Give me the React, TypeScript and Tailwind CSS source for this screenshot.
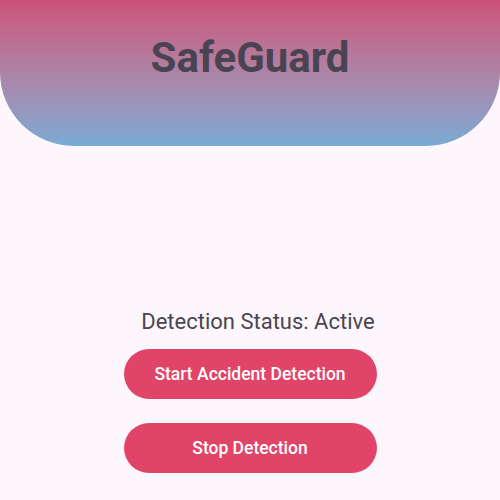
import React from 'react';

const App = () => {
  return (
    <div className="min-h-[500px] w-full bg-[#fdf7fd] font-['Roboto',sans-serif]">
      <header className="h-[146px] rounded-b-[74px] bg-gradient-to-b from-[#cb5179] to-[#78aad4] flex justify-center pt-[33px]">
        <h1 className="text-[42px] leading-[50px] font-bold text-[#4a4452]">SafeGuard</h1>
      </header>

      <main className="flex flex-col items-center pt-[162px]">
        <p className="ml-[16px] text-[22px] leading-[28px] text-[#49454f]">Detection Status: Active</p>
        <div className="mt-[13px] flex flex-col gap-[24px]">
          <button className="w-[253px] h-[50px] rounded-full bg-[#e14469] text-white text-[17.5px] font-medium">
            Start Accident Detection
          </button>
          <button className="w-[253px] h-[50px] rounded-full bg-[#e14469] text-white text-[17.5px] font-medium">
            Stop Detection
          </button>
        </div>
      </main>
    </div>
  );
};

export default App;
